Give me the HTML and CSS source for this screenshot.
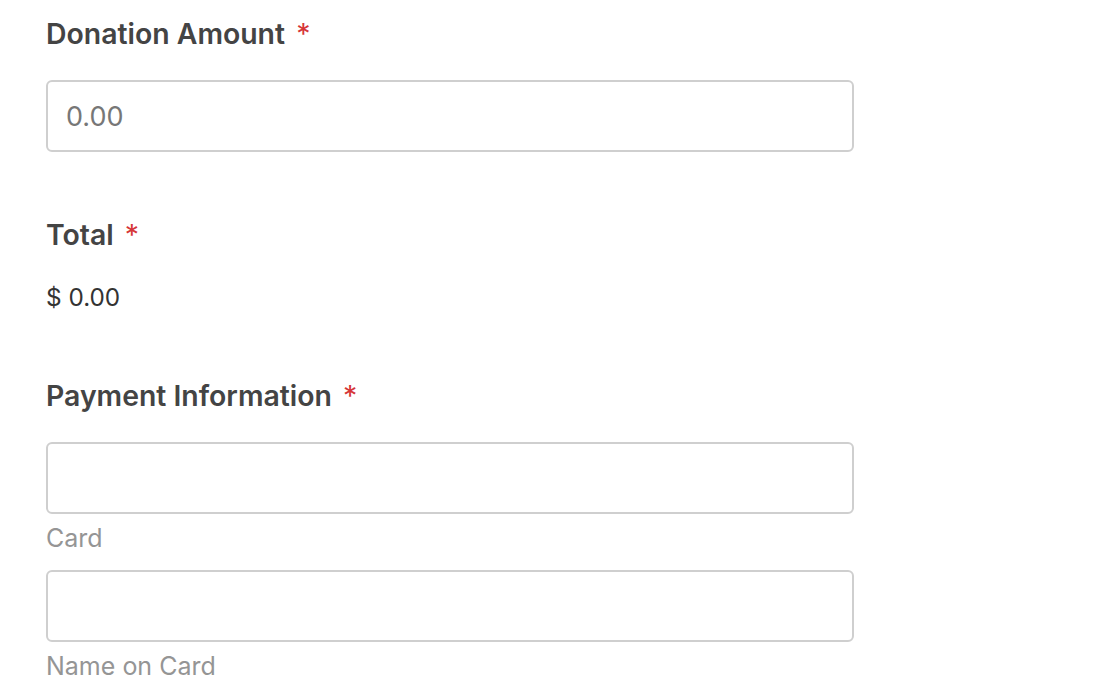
FILE: index.html
```html
<!DOCTYPE html>
<html lang="en">
<head>
  <meta charset="UTF-8" />
  <title>Donation Form</title>
  <link rel="stylesheet" href="styles.css">
</head>
<body>

<form class="donate-form">
  <div class="field">
    <label class="field-label">Donation Amount <span class="req">*</span></label>
    <input type="text" class="field-input" placeholder="0.00" />
  </div>

  <div class="field">
    <label class="field-label">Total <span class="req">*</span></label>
    <div class="total">$ 0.00</div>
  </div>

  <div class="field">
    <label class="field-label">Payment Information <span class="req">*</span></label>
    <input type="text" class="field-input" />
    <div class="sublabel">Card</div>
    <input type="text" class="field-input" />
    <div class="sublabel">Name on Card</div>
  </div>
</form>

</body>
</html>
```

FILE: styles.css
```css
* { margin: 0; padding: 0; box-sizing: border-box; }
body, html { height: 100%; overflow: hidden; background: #fff; }

body {
  font-family: Inter, "Noto Sans", sans-serif;
  color: #444;
}

.donate-form {
  width: 808px;
  margin-left: 46px;
  padding-top: 14px;
}

.field { margin-bottom: 63px; }
.field:last-child { margin-bottom: 0; }

.field-label {
  display: block;
  font-size: 28.4px;
  font-weight: 600;
  line-height: 40px;
  color: #444;
  margin-bottom: 26px;
}

.req {
  color: #d63638;
  font-weight: 400;
  margin-left: 4px;
}

.field-input {
  display: block;
  width: 100%;
  height: 72px;
  border: 2px solid #cfcfcf;
  border-radius: 6px;
  padding: 0 18px;
  font-family: inherit;
  font-size: 27px;
  color: #444;
  background: #fff;
}

.field-input::placeholder { color: #777; }

.total {
  font-size: 24.3px;
  line-height: 32px;
  color: #333;
}

.sublabel {
  font-size: 25px;
  line-height: 32px;
  color: #959595;
  margin: 8px 0 16px;
}
```
